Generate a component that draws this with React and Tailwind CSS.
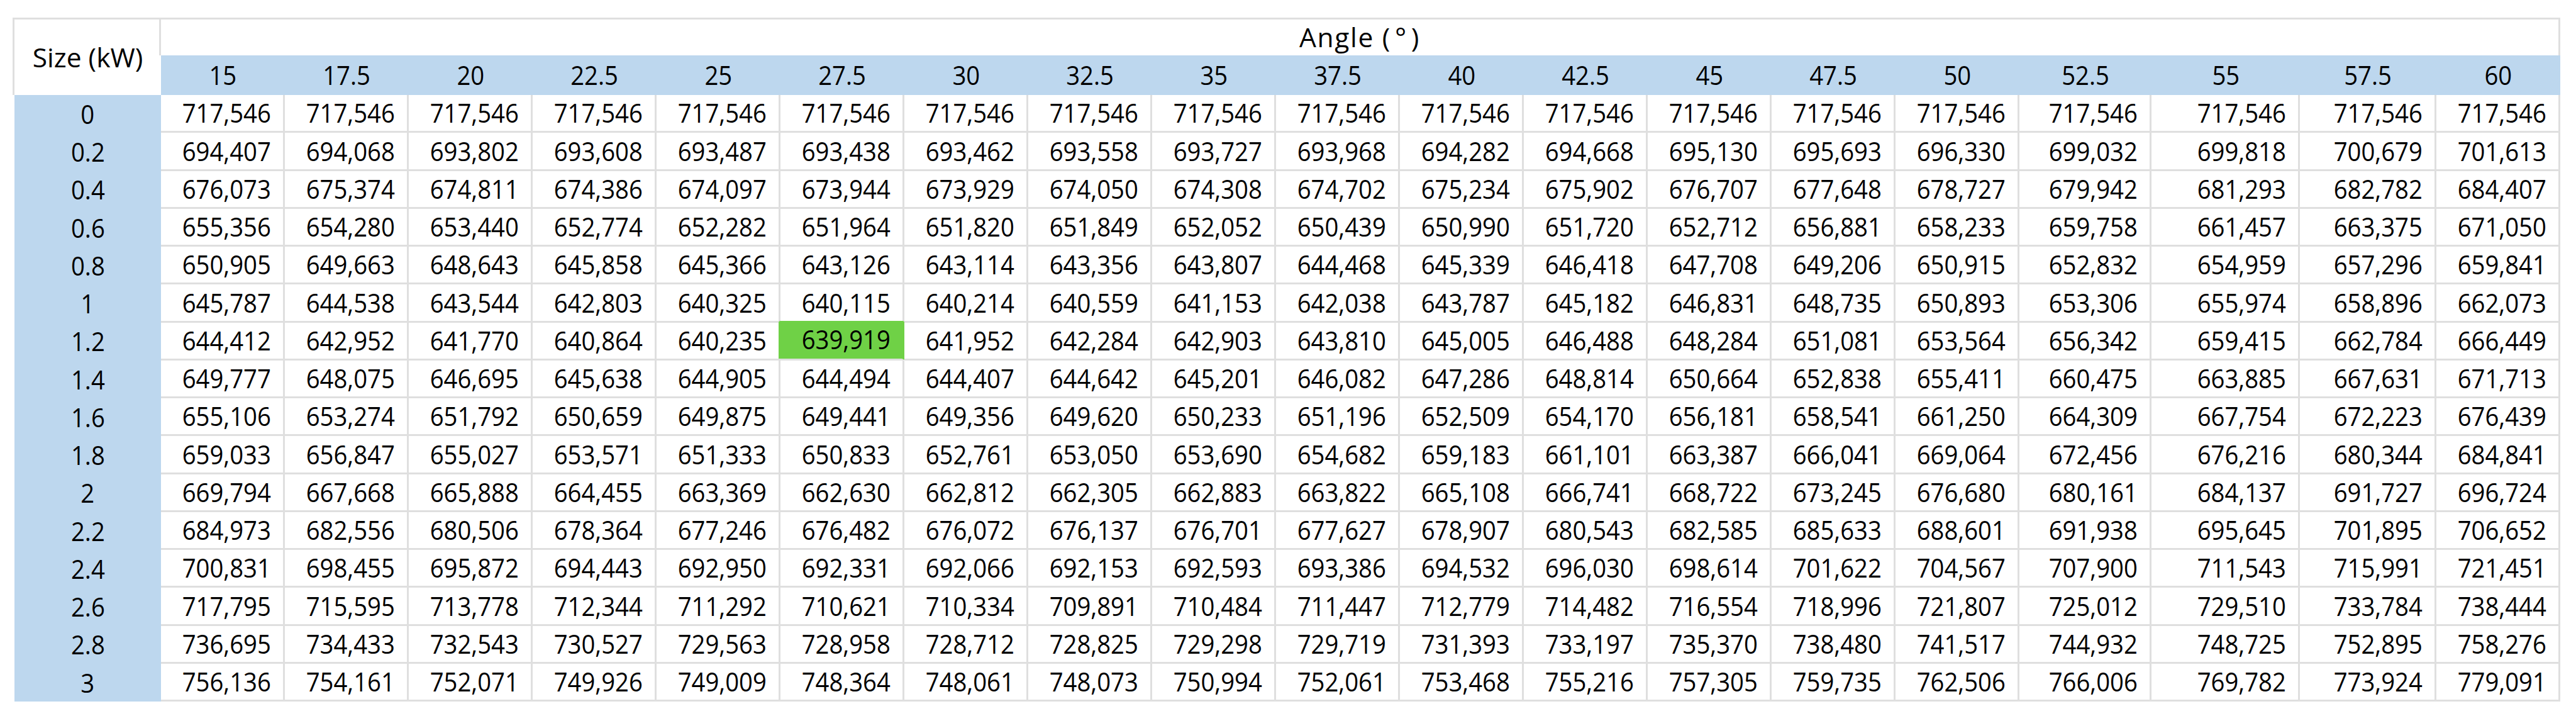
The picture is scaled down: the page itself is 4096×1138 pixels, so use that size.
/**
 * Annual energy table: Size (kW) by tilt Angle (°).
 * Rendered as a grid so the blue header row and side column
 * can sit flush against the data cells without gridlines.
 */
const angles = ["15", "17.5", "20", "22.5", "25", "27.5", "30", "32.5", "35", "37.5", "40", "42.5", "45", "47.5", "50", "52.5", "55", "57.5", "60"];

const rows = [
  ["0", "717,546 717,546 717,546 717,546 717,546 717,546 717,546 717,546 717,546 717,546 717,546 717,546 717,546 717,546 717,546 717,546 717,546 717,546 717,546"],
  ["0.2", "694,407 694,068 693,802 693,608 693,487 693,438 693,462 693,558 693,727 693,968 694,282 694,668 695,130 695,693 696,330 699,032 699,818 700,679 701,613"],
  ["0.4", "676,073 675,374 674,811 674,386 674,097 673,944 673,929 674,050 674,308 674,702 675,234 675,902 676,707 677,648 678,727 679,942 681,293 682,782 684,407"],
  ["0.6", "655,356 654,280 653,440 652,774 652,282 651,964 651,820 651,849 652,052 650,439 650,990 651,720 652,712 656,881 658,233 659,758 661,457 663,375 671,050"],
  ["0.8", "650,905 649,663 648,643 645,858 645,366 643,126 643,114 643,356 643,807 644,468 645,339 646,418 647,708 649,206 650,915 652,832 654,959 657,296 659,841"],
  ["1", "645,787 644,538 643,544 642,803 640,325 640,115 640,214 640,559 641,153 642,038 643,787 645,182 646,831 648,735 650,893 653,306 655,974 658,896 662,073"],
  ["1.2", "644,412 642,952 641,770 640,864 640,235 639,919 641,952 642,284 642,903 643,810 645,005 646,488 648,284 651,081 653,564 656,342 659,415 662,784 666,449"],
  ["1.4", "649,777 648,075 646,695 645,638 644,905 644,494 644,407 644,642 645,201 646,082 647,286 648,814 650,664 652,838 655,411 660,475 663,885 667,631 671,713"],
  ["1.6", "655,106 653,274 651,792 650,659 649,875 649,441 649,356 649,620 650,233 651,196 652,509 654,170 656,181 658,541 661,250 664,309 667,754 672,223 676,439"],
  ["1.8", "659,033 656,847 655,027 653,571 651,333 650,833 652,761 653,050 653,690 654,682 659,183 661,101 663,387 666,041 669,064 672,456 676,216 680,344 684,841"],
  ["2", "669,794 667,668 665,888 664,455 663,369 662,630 662,812 662,305 662,883 663,822 665,108 666,741 668,722 673,245 676,680 680,161 684,137 691,727 696,724"],
  ["2.2", "684,973 682,556 680,506 678,364 677,246 676,482 676,072 676,137 676,701 677,627 678,907 680,543 682,585 685,633 688,601 691,938 695,645 701,895 706,652"],
  ["2.4", "700,831 698,455 695,872 694,443 692,950 692,331 692,066 692,153 692,593 693,386 694,532 696,030 698,614 701,622 704,567 707,900 711,543 715,991 721,451"],
  ["2.6", "717,795 715,595 713,778 712,344 711,292 710,621 710,334 709,891 710,484 711,447 712,779 714,482 716,554 718,996 721,807 725,012 729,510 733,784 738,444"],
  ["2.8", "736,695 734,433 732,543 730,527 729,563 728,958 728,712 728,825 729,298 729,719 731,393 733,197 735,370 738,480 741,517 744,932 748,725 752,895 758,276"],
  ["3", "756,136 754,161 752,071 749,926 749,009 748,364 748,061 748,073 750,994 752,061 753,468 755,216 757,305 759,735 762,506 766,006 769,782 773,924 779,091"],
];

// the lowest value in the table gets the green highlight
const BEST = { row: 6, col: 5 };

export default function App() {
  return (
    <div className="min-h-screen bg-white pl-[20px] pt-[28px] font-['Open_Sans',sans-serif] text-[42.5px] text-black">
      <div className="grid w-fit grid-cols-[236px_repeat(15,197px)_210px_236px_217px_197px] grid-rows-[60px_63px_repeat(16,60.25px)]">
        {/* Size (kW) header, spans both header rows */}
        <div className="row-span-2 flex items-center justify-center border-t-[3px] border-l-[3px] border-[#dfdfdf] bg-white">
          <span className="leading-none">Size (kW)</span>
        </div>

        {/* Angle group header */}
        <div className="col-span-19 -ml-[3px] flex items-center justify-center border-t-[3px] border-l-[3px] border-r-[3px] border-[#dfdfdf] bg-white">
          <span className="leading-none tracking-[0.04em]">
            Angle (<span className="inline-block w-[0.75em] text-center">°</span>)
          </span>
        </div>

        {/* Angle values */}
        {angles.map((a) => (
          <div key={a} className="flex items-center justify-center bg-[#bdd7ee]">
            <span className="inline-block scale-x-90 leading-none">{a}</span>
          </div>
        ))}

        {/* Data rows */}
        {rows.map(([size, values], r) => [
          <div
            key={`s-${size}`}
            className="flex items-center justify-center border-l-[3px] border-white bg-[#bdd7ee]"
          >
            <span className="inline-block scale-x-90 leading-none">{size}</span>
          </div>,
          ...values.split(" ").map((v, c) => {
            const best = r === BEST.row && c === BEST.col;
            return (
              <div
                key={`${size}-${c}`}
                className={
                  best
                    ? "-ml-[3px] -mt-[3px] flex items-center justify-end rounded-[3px] border-r-[3px] border-b-[3px] border-r-[#6fd146] border-b-[#dfdfdf] bg-[#6fd146] pr-[19px]"
                    : "flex items-center justify-end border-r-[3px] border-b-[3px] border-[#dfdfdf] bg-white pr-[19px]"
                }
              >
                <span className="inline-block origin-right scale-x-90 leading-none">{v}</span>
              </div>
            );
          }),
        ])}
      </div>
    </div>
  );
}
